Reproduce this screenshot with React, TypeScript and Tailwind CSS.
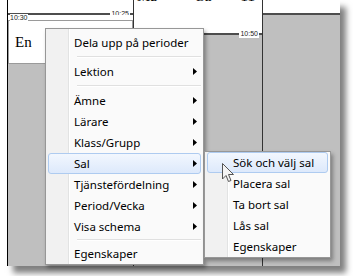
import React from "react";

const Arrow = () => (
  <svg width="4" height="7" viewBox="0 0 4 7" className="block">
    <path d="M0 0 L4 3.5 L0 7 Z" fill="#000" />
  </svg>
);

type Item = { label: string; sub?: boolean; sep?: number; active?: boolean };

const mainItems: Item[] = [
  { label: "Dela upp på perioder" },
  { label: "", sep: 8 },
  { label: "Lektion", sub: true },
  { label: "", sep: 8 },
  { label: "Ämne", sub: true },
  { label: "Lärare", sub: true },
  { label: "Klass/Grupp", sub: true },
  { label: "Sal", sub: true, active: true },
  { label: "Tjänstefördelning", sub: true },
  { label: "Period/Vecka", sub: true },
  { label: "Visa schema", sub: true },
  { label: "", sep: 6 },
  { label: "Egenskaper" },
];

const subItems: Item[] = [
  { label: "Sök och välj sal", active: true },
  { label: "Placera sal" },
  { label: "Ta bort sal" },
  { label: "Lås sal" },
  { label: "Egenskaper" },
];

function MenuRow({ item }: { item: Item }) {
  if (item.sep) {
    return (
      <div
        className="flex items-center pl-[31px] pr-[2px]"
        style={{ height: item.sep }}
      >
        <div className="w-full border-t border-[#e0e0e0] border-b border-b-white" />
      </div>
    );
  }
  return (
    <div className="h-[21px] px-[2px]">
      <div
        className={
          "h-full flex items-center rounded-[3px] border " +
          (item.active
            ? "border-[#aecbf0] bg-gradient-to-b from-[#f2f7fe] to-[#dde9fb]"
            : "border-transparent")
        }
      >
        <span className="pl-[25px] flex-1 text-black">{item.label}</span>
        {item.sub && (
          <span className="pr-[3px]">
            <Arrow />
          </span>
        )}
      </div>
    </div>
  );
}

function Menu({ items, className }: { items: Item[]; className: string }) {
  return (
    <div
      className={
        "absolute border border-[#979797] bg-[#fafafa] shadow-[2px_3px_4px_rgba(0,0,0,0.35)] " +
        className
      }
    >
      <div className="absolute left-0 top-0 bottom-0 w-[23px] bg-[#f1f1f1] border-r border-r-[#e2e3e3]" />
      <div className="absolute left-[23px] top-0 bottom-0 w-px bg-white" />
      <div className="relative">
        {items.map((it, i) => (
          <MenuRow key={i} item={it} />
        ))}
      </div>
    </div>
  );
}

const Cursor = () => (
  <svg
    width="13"
    height="20"
    viewBox="0 0 13 20"
    className="absolute left-[222px] top-[163px]"
  >
    <path
      d="M0.5 0.5 L0.5 16 L4 12.5 L6.5 18.5 L9 17.5 L6.5 11.5 L11.5 11.5 Z"
      fill="#f4f4f4"
      stroke="#555"
      strokeWidth="1"
      strokeLinejoin="round"
    />
  </svg>
);

export default function App() {
  return (
    <div
      className="relative w-[353px] h-[276px] bg-white overflow-hidden text-[11.5px] leading-none"
      style={{ fontFamily: '"Noto Sans", "Open Sans", sans-serif' }}
    >
      <div className="ml-[7px] w-[333px] h-[266px] flex bg-white shadow-[6px_7px_6px_rgba(0,0,0,0.5)]">
        {/* column 1 */}
        <div className="w-[127px] border-l border-l-black border-r border-r-[#333] flex flex-col">
          <div className="h-[13px] bg-white" />
          <div className="relative h-[2px] bg-[#4d4d4d]">
            <span
              className="absolute right-[3px] top-[-4px] bg-white text-[7px] leading-[9px] text-[#222] px-px"
              style={{ fontFamily: '"Liberation Sans", sans-serif' }}
            >
              10:25
            </span>
          </div>
          <div className="relative h-[5px] bg-white">
            <span
              className="absolute left-[2px] top-[-1px] bg-white text-[7px] leading-[7px] text-[#222]"
              style={{ fontFamily: '"Liberation Sans", sans-serif' }}
            >
              10:30
            </span>
          </div>
          <div className="h-[44px] border border-[#9a9a9a] bg-white flex items-center pl-[6px]">
            <span
              className="text-[15px] text-black"
              style={{ fontFamily: '"Liberation Serif", serif' }}
            >
              En
            </span>
          </div>
          <div className="flex-1 bg-[#bfbfbf]" />
        </div>
        {/* column 2 */}
        <div className="w-[129px] border-r border-r-[#333] flex flex-col">
          <div
            className="h-[33px] bg-white overflow-hidden relative"
            style={{ fontFamily: '"Liberation Serif", serif' }}
          >
            <div className="flex text-[15px] leading-[15px] mt-[-11px] text-black">
              <span className="ml-[3px]">Ma</span>
              <span className="ml-[37px]">Cu</span>
              <span className="ml-[29px]">11</span>
            </div>
          </div>
          <div className="relative h-[2px] bg-[#4d4d4d]">
            <span
              className="absolute right-[3px] top-[-4px] bg-white text-[7px] leading-[9px] text-[#222] px-px"
              style={{ fontFamily: '"Liberation Sans", sans-serif' }}
            >
              10:50
            </span>
          </div>
          <div className="flex-1 bg-[#bfbfbf]" />
        </div>
        {/* column 3 */}
        <div className="flex-1 flex flex-col">
          <div className="h-[13px] bg-white" />
          <div className="h-[2px] bg-[#4d4d4d]" />
          <div className="flex-1 bg-[#bfbfbf]" />
        </div>
      </div>

      <Menu items={mainItems} className="left-[45px] top-[28px] w-[159px] pt-[3px]" />
      <Menu items={subItems} className="left-[204px] top-[151px] w-[127px]" />
      <Cursor />
    </div>
  );
}
